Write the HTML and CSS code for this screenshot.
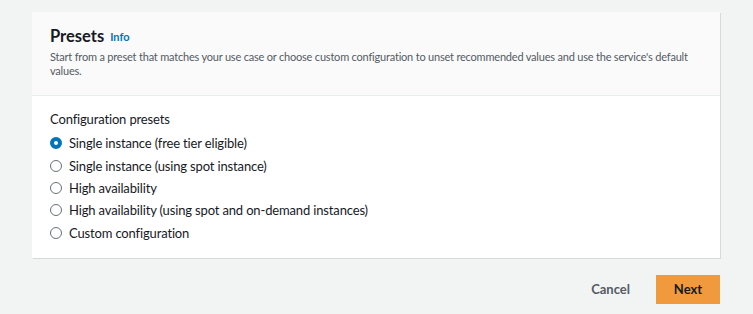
FILE: index.html
```html
<!DOCTYPE html>
<html lang="en">
<head>
<meta charset="UTF-8">
<meta name="viewport" content="width=device-width, initial-scale=1.0">
<title>Presets</title>
<link rel="stylesheet" href="styles.css">
</head>
<body>

  <div class="card">
    <div class="card-header">
      <h2 class="title">Presets <a class="info" href="#">Info</a></h2>
      <p class="description">Start from a preset that matches your use case or choose custom configuration to unset recommended values and use the service's default values.</p>
    </div>
    <div class="card-body">
      <div class="label">Configuration presets</div>
      <div class="radio-group">
        <label class="radio"><span class="dot checked"></span>Single instance (free tier eligible)</label>
        <label class="radio"><span class="dot"></span>Single instance (using spot instance)</label>
        <label class="radio"><span class="dot"></span>High availability</label>
        <label class="radio"><span class="dot"></span>High availability (using spot and on-demand instances)</label>
        <label class="radio"><span class="dot"></span>Custom configuration</label>
      </div>
    </div>
  </div>

  <div class="actions">
    <button class="btn-link">Cancel</button>
    <button class="btn-primary">Next</button>
  </div>

</body>
</html>
```

FILE: styles.css
```css
body {
  margin: 0;
  background-color: #f2f3f3;
  font-family: Lato, "Open Sans", sans-serif;
  color: #16191f;
}

.card {
  margin: 12px 33px 0 32px;
  width: 688px;
  background-color: #fff;
  box-shadow: 1px 1px 0 0 #d5dbdb;
}

.card-header {
  background-color: #fafafa;
  border-bottom: 1px solid #eaeded;
  padding: 13px 18px 17px 18px;
}

.title {
  margin: 0;
  font-size: 16.5px;
  font-weight: 700;
  line-height: 22px;
}

.info {
  font-size: 11px;
  font-weight: 700;
  color: #0073bb;
  text-decoration: none;
  margin-left: 2px;
  vertical-align: 1px;
}

.description {
  margin: 2px 0 0 0;
  font-size: 11px;
  letter-spacing: -0.2px;
  line-height: 14px;
  color: #545b64;
}

.card-body {
  padding: 14px 18px 14px 18px;
}

.label {
  font-size: 13px;
  letter-spacing: -0.15px;
  line-height: 18px;
  margin-bottom: 4px;
}

.radio-group {
  display: flex;
  flex-direction: column;
}

.radio {
  display: flex;
  align-items: center;
  height: 22.4px;
  font-size: 13px;
  letter-spacing: -0.15px;
}

.dot {
  width: 10px;
  height: 10px;
  border: 1px solid #687078;
  border-radius: 50%;
  margin-right: 7px;
  box-sizing: content-box;
}

.dot.checked {
  width: 4px;
  height: 4px;
  border: 4px solid #0073bb;
}

.actions {
  display: flex;
  justify-content: flex-end;
  align-items: center;
  gap: 26px;
  width: 720px;
  margin-top: 17px;
}

.btn-link {
  background: none;
  border: none;
  font-family: inherit;
  font-size: 13px;
  font-weight: 700;
  color: #545b64;
  padding: 0;
}

.btn-primary {
  background-color: #f0993d;
  border: none;
  font-family: inherit;
  font-size: 13px;
  font-weight: 700;
  color: #16191f;
  width: 64px;
  height: 29px;
  padding: 0;
}
```
